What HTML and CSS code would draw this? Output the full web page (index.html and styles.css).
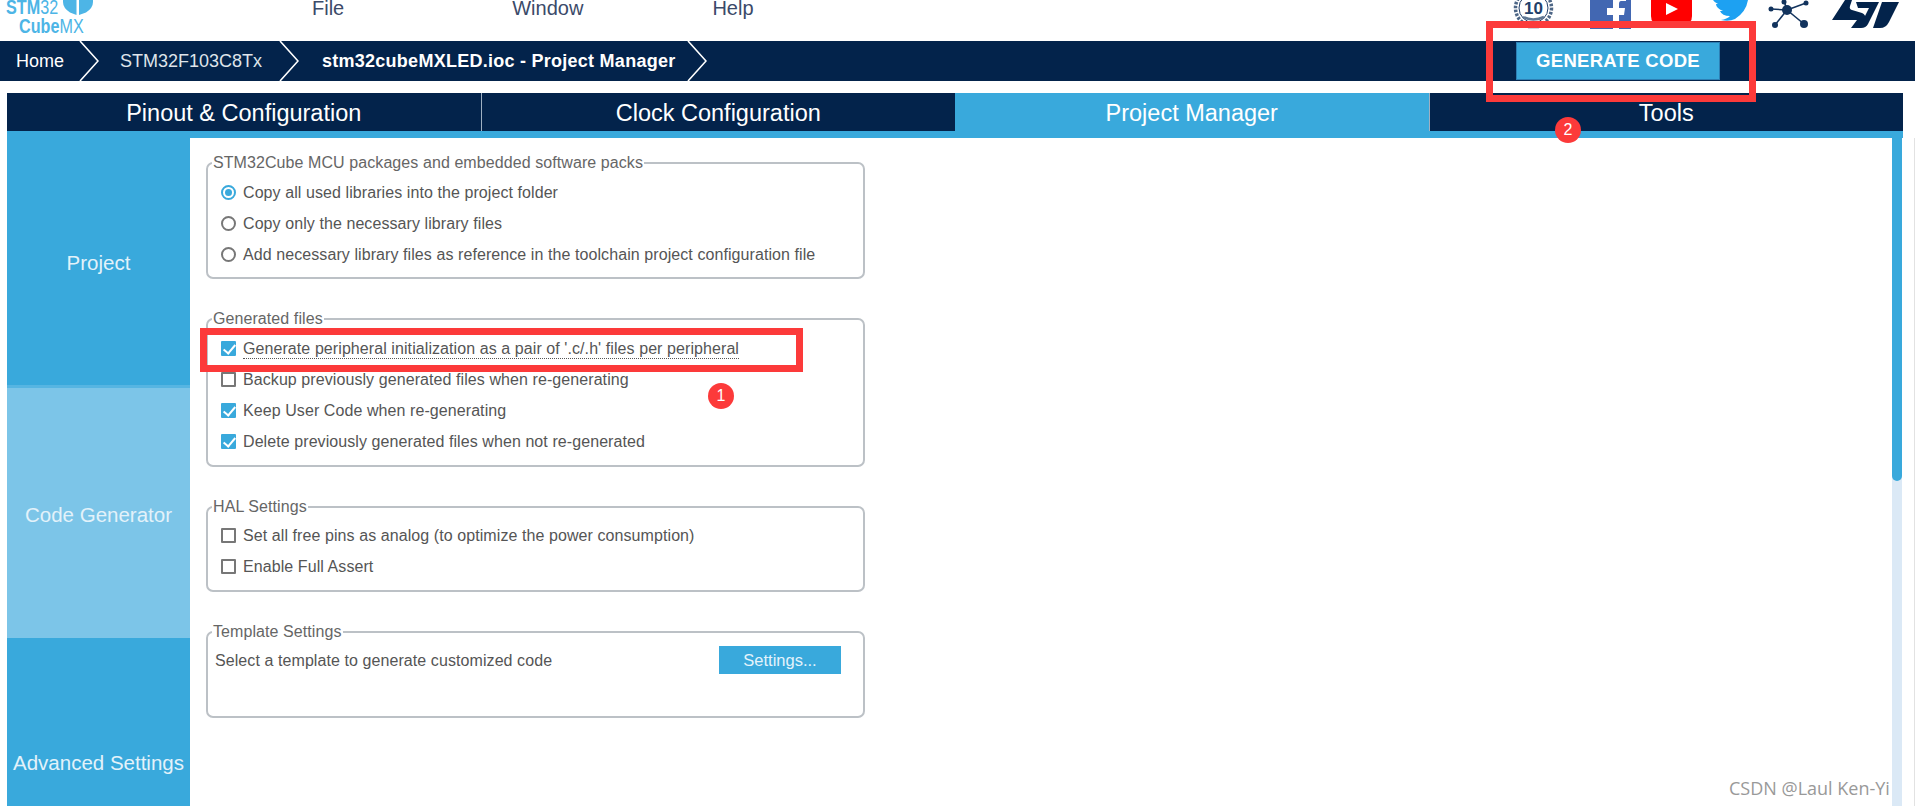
FILE: index.html
```html
<!DOCTYPE html>
<html lang="en">
<head>
    <meta charset="UTF-8">
    <title>STM32CubeMX - Project Manager</title>
    <link rel="stylesheet" href="styles.css">
</head>
<body>
<div class="page">
    <header class="topbar">
        <div class="logo">
            <div class="logo-line">
                <span class="logo-text logo-main"><b>STM</b>32</span>
                <svg class="logo-cube" width="30" height="15" viewBox="0 0 30 15">
                    <path fill="#4db5e6" d="M0 0H13.5V15L7 12.5Q0 8 0 2zM16 0H30V2Q30 8 23 12.5L16 15z"/>
                </svg>
            </div>
            <div class="logo-text logo-sub"><b>Cube</b>MX</div>
        </div>
        <nav class="menu">
            <span class="menu-file">File</span>
            <span class="menu-window">Window</span>
            <span class="menu-help">Help</span>
        </nav>
        <div class="social">
            <svg class="ic-medal" width="41" height="29" viewBox="0 0 41 29">
                <circle cx="20.5" cy="8" r="18" fill="none" stroke="#4d6686" stroke-width="3.5" stroke-dasharray="2.5 1.5"/>
                <circle cx="20.5" cy="8" r="14.5" fill="#fff" stroke="#22406a" stroke-width="1"/>
                <text x="20.5" y="14" class="medal-text">10</text>
                <path d="M10 17Q20 22 31 17" fill="none" stroke="#5f7793" stroke-width="2.5"/>
                <path d="M15 28Q20 29 26 28" fill="none" stroke="#cfd6df" stroke-width="1.5"/>
            </svg>
            <svg class="ic-fb" width="41" height="29" viewBox="0 0 41 29">
                <rect width="41" height="29" fill="#4267b2"/>
                <path fill="#fff" d="M23 29V15H17V8H23V0H36V1H31Q29 1 29 4V8H35L34 15H29V29z"/>
            </svg>
            <svg class="ic-yt" width="41" height="24" viewBox="0 0 41 24">
                <path fill="#ff0000" d="M0 0H41V16Q41 24 33 24H8Q0 24 0 16z"/>
                <path fill="#fff" d="M15 3L27 9L15 15z"/>
            </svg>
            <svg class="ic-tw" width="36" height="22" viewBox="0 0 36 22">
                <path fill="#1da1f2" d="M0 0H35Q33 12 22 19Q16 22 8 20Q14 19 17 16Q9 16 7 11H10Q3 8 3 4H5Q1 2 0 0z"/>
            </svg>
            <svg class="ic-net" width="42" height="29" viewBox="0 0 42 29">
                <g stroke="#12335d" stroke-width="1.600">
                    <line x1="19" y1="10" x2="16" y2="1"/>
                    <line x1="19" y1="10" x2="38" y2="3"/>
                    <line x1="19" y1="10" x2="3" y2="9"/>
                    <line x1="19" y1="10" x2="7" y2="25"/>
                    <line x1="19" y1="10" x2="36" y2="24"/>
                </g>
                <g fill="#12335d">
                    <circle cx="19" cy="10" r="5"/>
                    <circle cx="16" cy="2" r="2.500"/>
                    <circle cx="38" cy="3" r="2.500"/>
                    <circle cx="3" cy="9" r="2.500"/>
                    <circle cx="7" cy="25" r="3"/>
                    <circle cx="36" cy="24" r="4"/>
                </g>
            </svg>
            <svg class="ic-st" width="68" height="29" viewBox="0 0 68 29">
                <g fill="#03234b">
                    <path d="M0 20L13 0H20L18 6Q17 9 20 10L30 13Q34 15 33 18L28 28H19L25 20z"/>
                    <path d="M24 2H47L36 24Q34 28 29 28H27L37 8H26z"/>
                    <path d="M50 2H67L57 22Q54 28 48 28H41z"/>
                </g>
            </svg>
        </div>
    </header>

    <nav class="crumbs">
        <span class="crumb crumb-home">Home</span>
        <svg class="chevron" width="20" height="40" viewBox="0 0 20 40"><polyline points="1,0 19,20 1,40"/></svg>
        <span class="crumb crumb-mcu">STM32F103C8Tx</span>
        <svg class="chevron" width="20" height="40" viewBox="0 0 20 40"><polyline points="1,0 19,20 1,40"/></svg>
        <span class="crumb crumb-file">stm32cubeMXLED.ioc - Project Manager</span>
        <svg class="chevron" width="20" height="40" viewBox="0 0 20 40"><polyline points="1,0 19,20 1,40"/></svg>
        <button class="generate-btn">GENERATE CODE</button>
    </nav>

    <div class="tabs">
        <div class="tab">Pinout &amp; Configuration</div>
        <div class="tab">Clock Configuration</div>
        <div class="tab active">Project Manager</div>
        <div class="tab">Tools</div>
    </div>

    <main class="main">
        <aside class="sidebar">
            <div class="side-item">Project</div>
            <div class="side-item current">Code Generator</div>
            <div class="side-item">Advanced Settings</div>
        </aside>

        <section class="content">
            <fieldset class="group group-packs">
                <legend>STM32Cube MCU packages and embedded software packs</legend>
                <label class="row"><span class="radio on"></span>Copy all used libraries into the project folder</label>
                <label class="row"><span class="radio"></span>Copy only the necessary library files</label>
                <label class="row"><span class="radio"></span>Add necessary library files as reference in the toolchain project configuration file</label>
            </fieldset>

            <fieldset class="group group-generated">
                <legend>Generated files</legend>
                <label class="row"><span class="check on"></span><span class="dotted">Generate peripheral initialization as a pair of '.c/.h' files per peripheral</span></label>
                <label class="row"><span class="check"></span>Backup previously generated files when re-generating</label>
                <label class="row"><span class="check on"></span>Keep User Code when re-generating</label>
                <label class="row"><span class="check on"></span>Delete previously generated files when not re-generated</label>
            </fieldset>

            <fieldset class="group group-hal">
                <legend>HAL Settings</legend>
                <label class="row"><span class="check"></span>Set all free pins as analog (to optimize the power consumption)</label>
                <label class="row"><span class="check"></span>Enable Full Assert</label>
            </fieldset>

            <fieldset class="group group-template">
                <legend>Template Settings</legend>
                <div class="template-row">
                    <span>Select a template to generate customized code</span>
                    <button class="settings-btn">Settings...</button>
                </div>
            </fieldset>
        </section>

        <div class="scrollbar"><div class="thumb"></div></div>
    </main>

    <!-- annotations drawn on top of the screenshot -->
    <div class="mark mark-1"></div>
    <div class="mark mark-2"></div>
    <span class="badge badge-1">1</span>
    <span class="badge badge-2">2</span>
    <span class="watermark">CSDN @Laul Ken-Yi</span>
</div>
</body>
</html>
```

FILE: styles.css
```css
* {
    box-sizing: border-box;
}

body {
    margin: 0;
    background: #fff;
    font-family: "Liberation Sans", Arial, sans-serif;
}

.page {
    position: relative;
    width: 1915px;
    height: 806px;
    overflow: hidden;
    background: #fff;
}

/* top bar */
.topbar {
    display: flex;
    height: 41px;
    overflow: hidden;
}

.logo {
    flex: none;
    width: 92px;
    margin-left: 6px;
    color: #4db5e6;
}

.logo-line {
    display: flex;
    height: 14px;
    align-items: flex-start;
}

.logo-text {
    font-size: 21px;
    line-height: 14px;
    white-space: nowrap;
    transform: scaleX(0.77);
    transform-origin: left center;
}

.logo-main {
    flex: none;
    width: 52px;
}

.logo-cube {
    flex: none;
    margin-left: 5px;
}

.logo-sub {
    margin: 5px 0 0 13px;
}

.menu {
    display: flex;
    height: 17px;
    font-size: 20px;
    line-height: 16px;
    color: #3b4a69;
}

.menu-file {
    margin-left: 214px;
}

.menu-window {
    margin-left: 168px;
}

.menu-help {
    margin-left: 129px;
}

.social {
    display: flex;
    align-items: flex-start;
    margin-left: auto;
    margin-right: 15px;
}

.ic-fb {
    margin-left: 36px;
}

.ic-yt {
    margin-left: 20px;
}

.ic-tw {
    margin-left: 21px;
}

.ic-net {
    margin-left: 19px;
}

.ic-st {
    margin-left: 22px;
}

.medal-text {
    font-size: 17px;
    font-weight: bold;
    fill: #22406a;
    text-anchor: middle;
}

/* breadcrumb */
.crumbs {
    display: flex;
    align-items: center;
    height: 40px;
    background: #03234b;
    color: #fff;
    font-size: 18px;
}

.crumb-home {
    margin-left: 16px;
    width: 63px;
}

.crumb-mcu {
    margin-left: 21px;
    width: 159px;
    color: #dfe4ea;
}

.crumb-file {
    margin-left: 23px;
    width: 365px;
    font-weight: bold;
    letter-spacing: 0.26px;
}

.chevron polyline {
    fill: none;
    stroke: #fff;
    stroke-width: 1.6;
}

.generate-btn {
    margin-left: auto;
    margin-right: 195px;
    width: 204px;
    height: 38px;
    background: #39a9dc;
    border: 1px solid #2d7fb4;
    color: #fff;
    font-family: inherit;
    font-size: 18.5px;
    font-weight: bold;
    letter-spacing: 0.3px;
}

/* tabs */
.tabs {
    display: flex;
    margin: 12px 12px 0 7px;
    height: 45px;
    background: #39a9dc;
}

.tab {
    flex: 1;
    height: 38px;
    background: #03234b;
    border-left: 1px solid #9fb0c2;
    color: #fff;
    font-size: 23.5px;
    line-height: 40px;
    text-align: center;
}

.tab:first-child {
    border-left: none;
}

.tab.active {
    background: #39a9dc;
    border-left: none;
    height: 45px;
}

/* main area */
.main {
    display: flex;
    height: 668px;
    margin-left: 7px;
    padding-right: 12px;
    border-right: 1px solid #e2e2e2;
}

.sidebar {
    flex: none;
    width: 183px;
    height: 752px;
}

.side-item {
    display: flex;
    align-items: center;
    justify-content: center;
    height: 250px;
    padding-top: 3px;
    background: #39a9dc;
    border-bottom: 3px solid #56b5e2;
    color: #e3f2fa;
    font-size: 20.5px;
}

.side-item.current {
    background: #7cc5e8;
    border-bottom: none;
}

.content {
    flex: 1;
    display: flex;
    flex-direction: column;
    gap: 30px;
    padding: 15px 0 0 16px;
}

.group {
    width: 659px;
    margin: 0;
    padding: 4px 13px 7px;
    border: 2px solid #bcc1c6;
    border-radius: 7px;
    color: #555;
    font-size: 16px;
    letter-spacing: 0.08px;
}

.group legend {
    margin-left: -9px;
    padding: 0 1px;
    height: 20px;
    line-height: 20px;
    color: #666;
}

.group-generated {
    padding-bottom: 8px;
}

.group-hal {
    padding-top: 3px;
    padding-bottom: 8px;
}

.group-template {
    padding: 4px 22px 42px 7px;
}

.group-template legend {
    margin-left: -3px;
}

.row {
    display: flex;
    align-items: center;
    height: 31px;
}

.dotted {
    border-bottom: 1px dotted #555;
    line-height: 19px;
    margin-top: 1px;
}

.radio,
.check {
    flex: none;
    position: relative;
    width: 15px;
    height: 15px;
    margin-right: 7px;
    border: 2px solid #777;
}

.radio {
    border-radius: 50%;
}

.radio.on {
    border-color: #39a9dc;
}

.radio.on::after {
    content: "";
    position: absolute;
    left: 2px;
    top: 2px;
    width: 7px;
    height: 7px;
    border-radius: 50%;
    background: #39a9dc;
}

.check {
    border-radius: 1px;
}

.check.on {
    background: #39a9dc;
    border-color: #39a9dc;
}

.check.on::after {
    content: "";
    position: absolute;
    left: 3px;
    top: -1px;
    width: 5px;
    height: 10px;
    border: solid #fff;
    border-width: 0 2px 2px 0;
    transform: rotate(40deg);
}

.template-row {
    display: flex;
    align-items: center;
    justify-content: space-between;
    height: 28px;
}

.template-row span {
    margin-top: 2px;
}

.settings-btn {
    width: 122px;
    height: 28px;
    background: #39a9dc;
    border: none;
    color: #e4f3fb;
    font-family: inherit;
    font-size: 16.5px;
}

.scrollbar {
    flex: none;
    width: 10px;
    height: 100%;
    background: #dbe9f6;
}

.thumb {
    height: 350px;
    margin-top: -7px;
    background: #39a9dc;
    border-radius: 5px;
}

/* red annotations */
.mark {
    position: absolute;
    border: 7px solid #fc3a3a;
}

.mark-1 {
    left: 200px;
    top: 328px;
    width: 603px;
    height: 44px;
}

.mark-2 {
    left: 1486px;
    top: 21px;
    width: 270px;
    height: 81px;
}

.badge {
    position: absolute;
    width: 26px;
    height: 26px;
    border-radius: 50%;
    background: #fc3a3a;
    color: #fff;
    font-size: 16px;
    line-height: 26px;
    text-align: center;
}

.badge-1 {
    left: 708px;
    top: 383px;
}

.badge-2 {
    left: 1555px;
    top: 117px;
}

.watermark {
    position: absolute;
    left: 1729px;
    top: 776px;
    color: #999;
    font-family: "Open Sans", sans-serif;
    font-size: 18px;
    line-height: 24px;
    white-space: nowrap;
}
```
